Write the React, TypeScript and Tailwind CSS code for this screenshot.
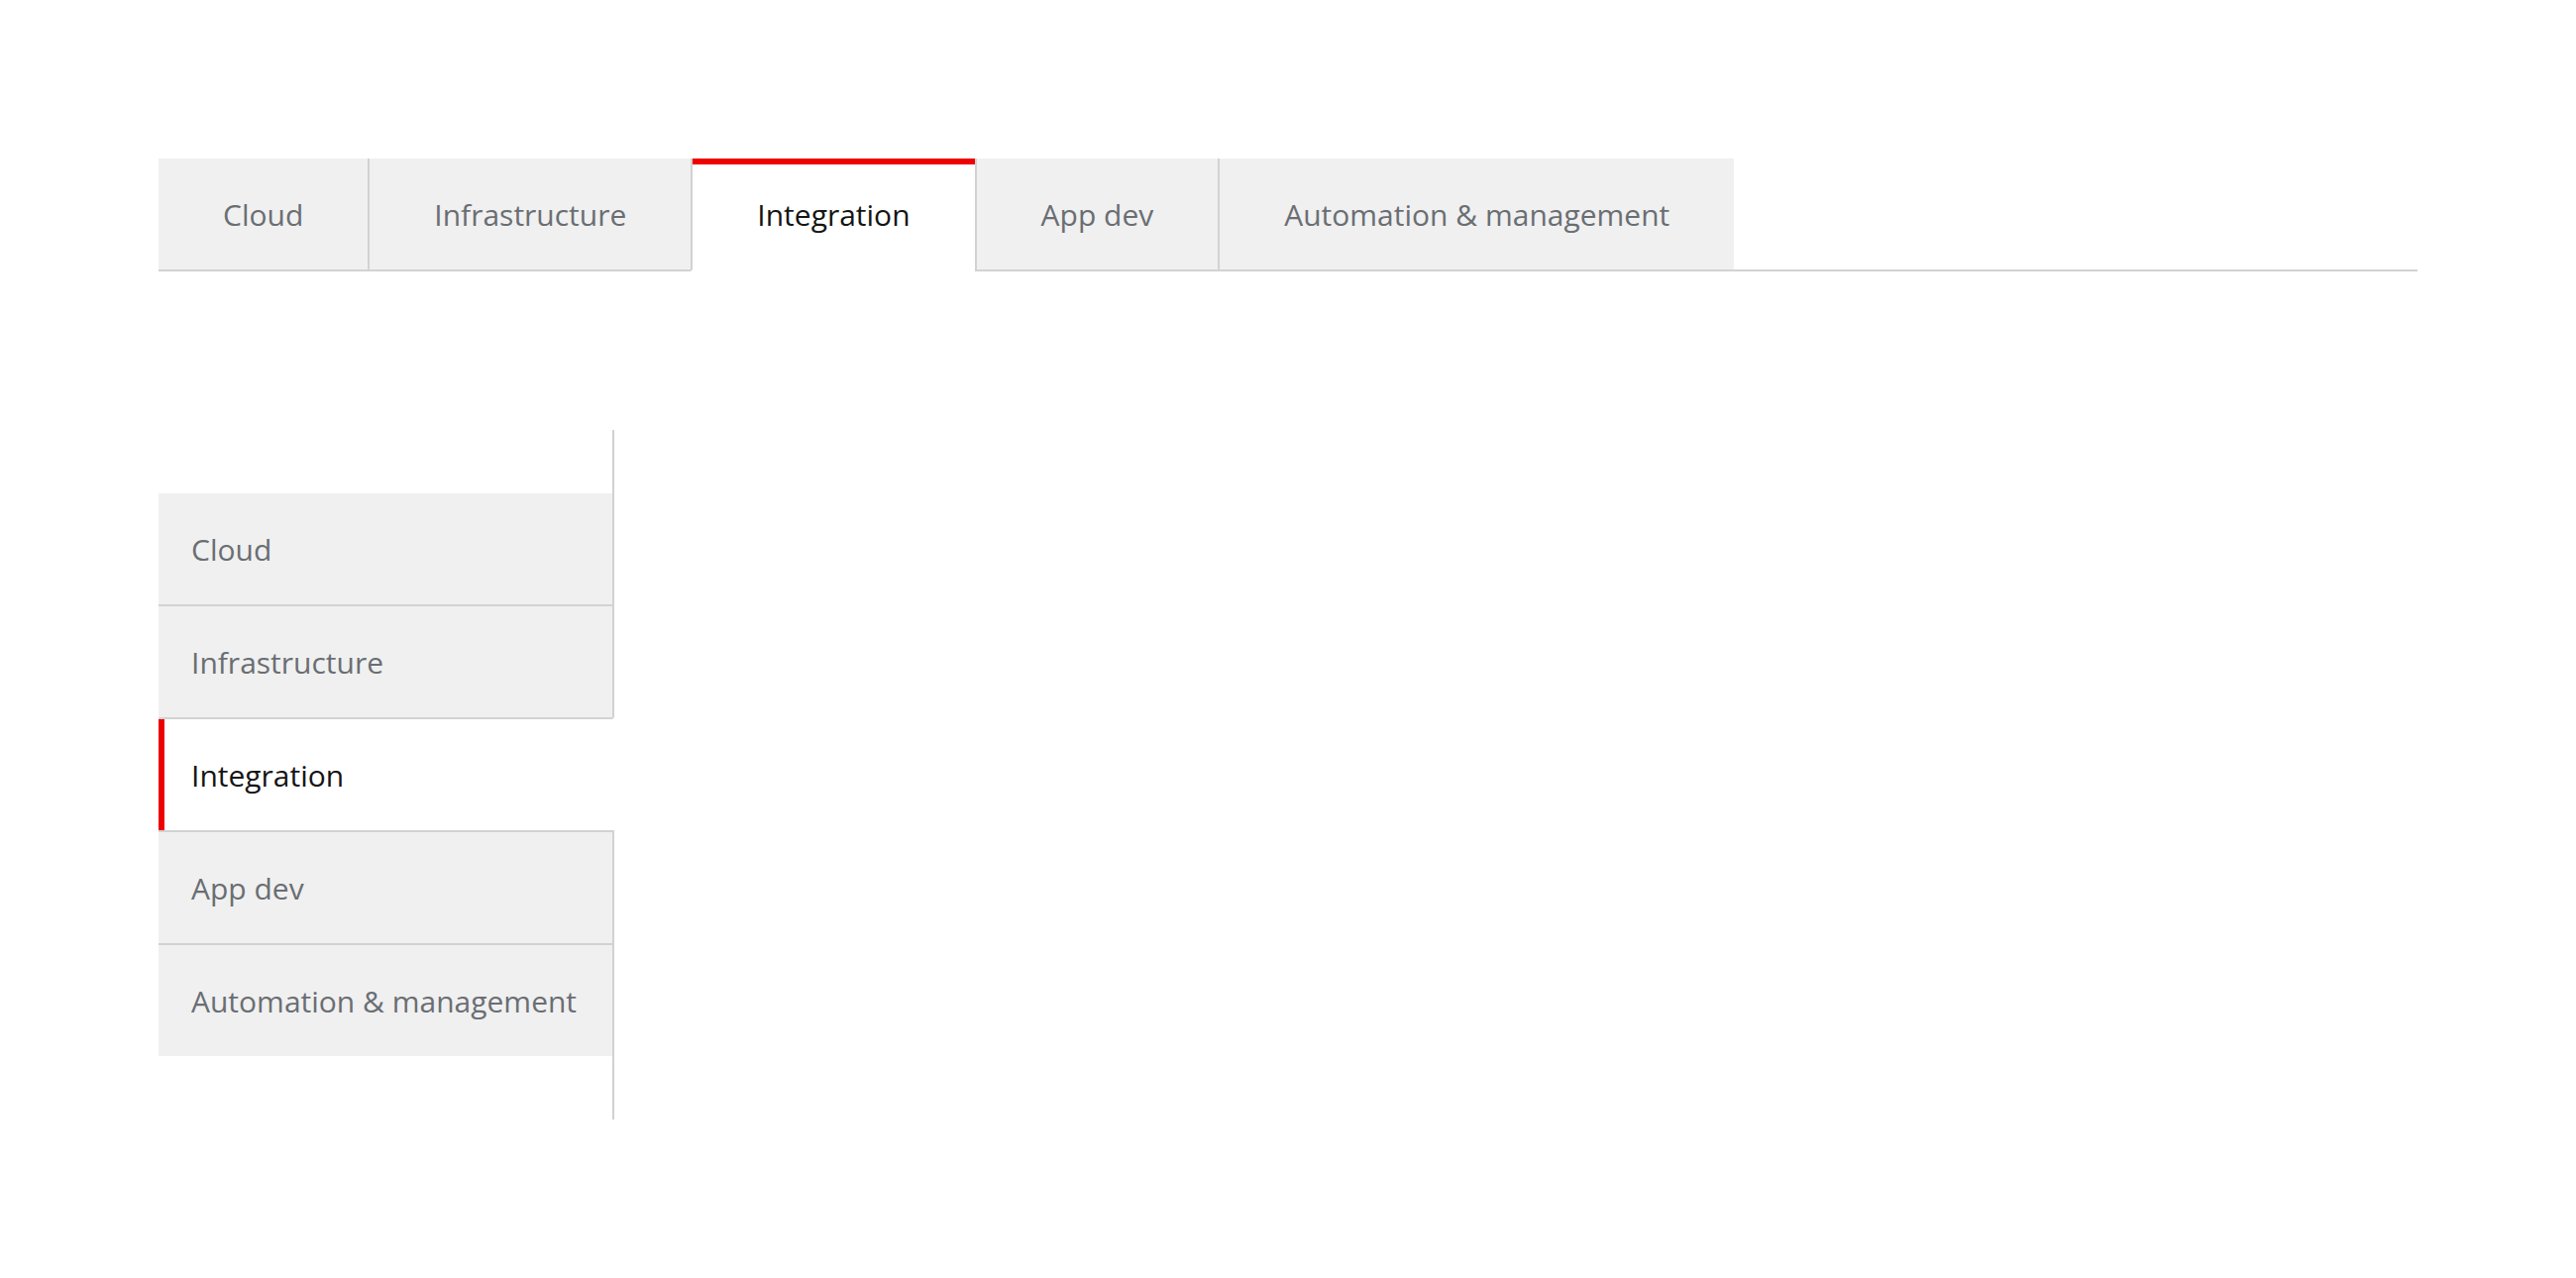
const items = ["Cloud", "Infrastructure", "Integration", "App dev", "Automation & management"]
const active = 2

function HorizontalTabs() {
  return (
    <div className="flex">
      {items.map((label, i) => {
        const isActive = i === active
        return (
          <button
            key={label}
            className={
              "h-[114px] px-[65px] flex items-center border-b-2 whitespace-nowrap " +
              (i > 0 ? "border-l-2 border-l-[#d2d2d2] " : "") +
              (isActive
                ? "bg-white border-b-white text-[#151515] shadow-[inset_0_6px_0_#ee0000]"
                : "bg-[#f0f0f0] border-b-[#d2d2d2] text-[#6a6e73]")
            }
          >
            {label}
          </button>
        )
      })}
      <div className="flex-1 border-b-2 border-[#d2d2d2]" />
    </div>
  )
}

function VerticalTabs() {
  return (
    <div className="w-[460px] flex flex-col py-16 border-r-2 border-[#d2d2d2]">
      {items.map((label, i) => {
        const isActive = i === active
        return (
          <button
            key={label}
            className={
              "w-[460px] -mr-[2px] text-left pl-[33px] flex items-center border-r-2 whitespace-nowrap " +
              (i > 0 ? "h-[114px] border-t-2 border-t-[#d2d2d2] " : "h-[112px] ") +
              (isActive
                ? "bg-white border-r-white text-[#151515] shadow-[inset_6px_0_0_#ee0000]"
                : "bg-[#f0f0f0] border-r-[#d2d2d2] text-[#6a6e73]")
            }
          >
            {label}
          </button>
        )
      })}
    </div>
  )
}

export default function App() {
  return (
    <main className="min-h-screen bg-white px-[160px] pt-[160px] font-['Open_Sans',sans-serif] text-[30px]">
      <HorizontalTabs />
      <div className="mt-[160px]">
        <VerticalTabs />
      </div>
    </main>
  )
}
